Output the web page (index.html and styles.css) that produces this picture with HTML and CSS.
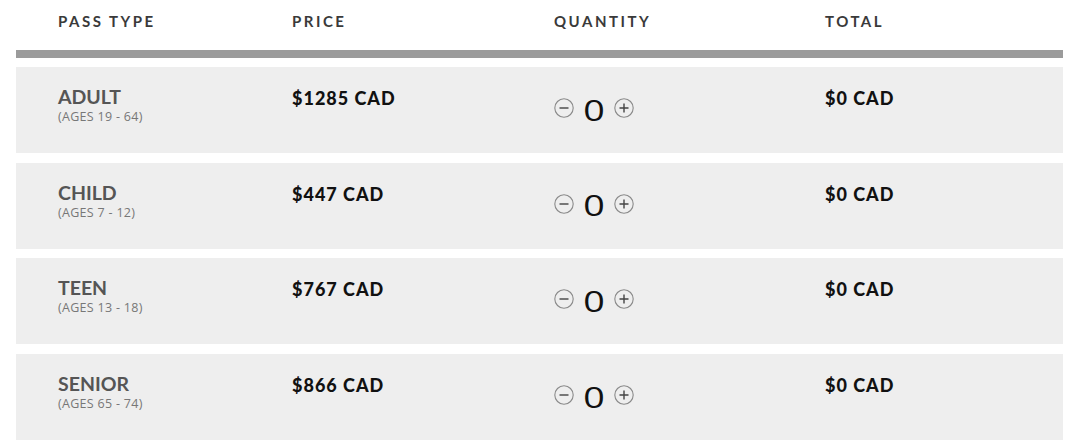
FILE: index.html
```html
<!DOCTYPE html>
<html>
<head>
<meta charset="utf-8">
<link rel="stylesheet" href="styles.css">
</head>
<body>
<div class="table">
  <div class="head">
    <div class="th">PASS TYPE</div>
    <div class="th">PRICE</div>
    <div class="th">QUANTITY</div>
    <div class="th">TOTAL</div>
  </div>
  <div class="rows">
    <div class="row">
      <div class="type"><div class="name">ADULT</div><div class="ages">(AGES 19 - 64)</div></div>
      <div class="price">$1285 CAD</div>
      <div class="qty">
        <svg class="ic" viewBox="0 0 20 20"><circle cx="10" cy="10" r="9.2" /><path d="M5.5 10h9"/></svg>
        <span class="num">0</span>
        <svg class="ic" viewBox="0 0 20 20"><circle cx="10" cy="10" r="9.2" /><path d="M5.5 10h9M10 5.5v9"/></svg>
      </div>
      <div class="price">$0 CAD</div>
    </div>
    <div class="row">
      <div class="type"><div class="name">CHILD</div><div class="ages">(AGES 7 - 12)</div></div>
      <div class="price">$447 CAD</div>
      <div class="qty">
        <svg class="ic" viewBox="0 0 20 20"><circle cx="10" cy="10" r="9.2" /><path d="M5.5 10h9"/></svg>
        <span class="num">0</span>
        <svg class="ic" viewBox="0 0 20 20"><circle cx="10" cy="10" r="9.2" /><path d="M5.5 10h9M10 5.5v9"/></svg>
      </div>
      <div class="price">$0 CAD</div>
    </div>
    <div class="row">
      <div class="type"><div class="name">TEEN</div><div class="ages">(AGES 13 - 18)</div></div>
      <div class="price">$767 CAD</div>
      <div class="qty">
        <svg class="ic" viewBox="0 0 20 20"><circle cx="10" cy="10" r="9.2" /><path d="M5.5 10h9"/></svg>
        <span class="num">0</span>
        <svg class="ic" viewBox="0 0 20 20"><circle cx="10" cy="10" r="9.2" /><path d="M5.5 10h9M10 5.5v9"/></svg>
      </div>
      <div class="price">$0 CAD</div>
    </div>
    <div class="row">
      <div class="type"><div class="name">SENIOR</div><div class="ages">(AGES 65 - 74)</div></div>
      <div class="price">$866 CAD</div>
      <div class="qty">
        <svg class="ic" viewBox="0 0 20 20"><circle cx="10" cy="10" r="9.2" /><path d="M5.5 10h9"/></svg>
        <span class="num">0</span>
        <svg class="ic" viewBox="0 0 20 20"><circle cx="10" cy="10" r="9.2" /><path d="M5.5 10h9M10 5.5v9"/></svg>
      </div>
      <div class="price">$0 CAD</div>
    </div>
  </div>
</div>
</body>
</html>
```
FILE: styles.css
```css
html, body {
  margin: 0;
  padding: 0;
  background: #fff;
}
body {
  font-family: Lato, "Open Sans", sans-serif;
}
.table {
  width: 1047px;
  margin-left: 16px;
}
.head {
  display: grid;
  grid-template-columns: 234px 262px 271px 1fr;
  padding: 12px 0 0 42px;
  height: 58px;
  box-sizing: border-box;
  border-bottom: 8px solid #9b9b9b;
}
.th {
  font-family: Lato, sans-serif;
  font-weight: 700;
  font-size: 15px;
  letter-spacing: 2.5px;
  color: #3a3a3a;
  line-height: 18px;
}
.rows {
  display: flex;
  flex-direction: column;
  gap: 9.7px;
  padding-top: 9px;
}
.row {
  display: grid;
  grid-template-columns: 234px 262px 271px 1fr;
  height: 86px;
  box-sizing: border-box;
  padding: 19px 0 0 42px;
  background: #eeeeee;
}
.name {
  font-family: Lato, sans-serif;
  font-weight: 700;
  font-size: 19.5px;
  line-height: 22px;
  color: #555;
}
.ages {
  font-family: "Open Sans", sans-serif;
  font-size: 12.5px;
  line-height: 16px;
  letter-spacing: 0.3px;
  color: #777;
  margin-top: 1px;
}
.price {
  font-family: Lato, sans-serif;
  font-weight: 900;
  font-size: 18px;
  line-height: 24px;
  color: #111;
  letter-spacing: 1px;
}
.qty {
  display: flex;
  align-items: center;
  margin-top: 7px;
  height: 30px;
}
.ic {
  width: 20px;
  height: 20px;
  fill: none;
  stroke: #444;
  stroke-width: 1.4;
}
.ic circle {
  stroke: #8a8a8a;
  stroke-width: 1.1;
}
.num {
  display: inline-block;
  width: 20px;
  margin: 3px 10px 0 10px;
  text-align: center;
  font-family: "Open Sans", sans-serif;
  font-size: 29px;
  line-height: 30px;
  color: #111;
  transform: scaleX(1.3);
}
```
